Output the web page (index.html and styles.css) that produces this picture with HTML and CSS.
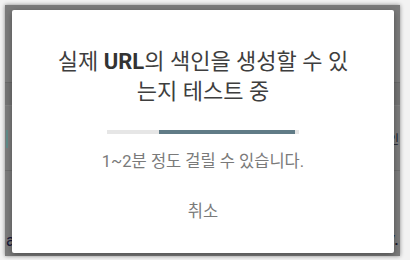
FILE: index.html
```html
<!DOCTYPE html>
<html lang="ko">
<head>
  <meta charset="UTF-8">
  <meta name="viewport" content="width=device-width, initial-scale=1.0">
  <title>URL 검사</title>
  <link rel="stylesheet" href="styles.css">
</head>
<body>

  <div class="backdrop">
    <div class="page">
      <div class="page-top"></div>
      <div class="page-band"></div>
      <div class="page-row">
        <span class="mark"></span>
        <span class="peek-right">인</span>
      </div>
      <div class="page-row last">
        <span class="peek-left">a</span>
        <span class="peek-right big">y.</span>
      </div>
    </div>

    <div class="dialog">
      <h1 class="title">실제 <strong>URL</strong>의 색인을 생성할 수 있는지 테스트 중</h1>
      <div class="progress"><div class="bar" style="margin-left: 27%; width: 71%"></div></div>
      <p class="note">1~2분 정도 걸릴 수 있습니다.</p>
      <button class="cancel">취소</button>
    </div>
  </div>

</body>
</html>
```

FILE: styles.css
```css
body {
  margin: 0;
  background: #f2f2f2;
  font-family: Roboto, "Noto Sans CJK KR", sans-serif;
}
.backdrop {
  position: relative;
  margin: 5px 10px 4px 5px;
  height: 251px;
  background: #7b7b7b;
  box-shadow: 0 0 4px rgba(0, 0, 0, 0.45);
  overflow: hidden;
}
.page {
  display: flex;
  flex-direction: column;
  height: 100%;
}
.page-top {
  height: 77px;
  border-bottom: 1px solid #6a6a6a;
}
.page-band {
  height: 22px;
  background: #747474;
  border-bottom: 1px solid #828282;
}
.page-row {
  height: 64px;
  border-bottom: 1px solid #6e6e6e;
  position: relative;
}
.page-row.last {
  flex: 1;
  border-bottom: none;
}
.mark {
  position: absolute;
  left: 1px;
  top: 24px;
  width: 2px;
  height: 18px;
  background: #5f8a88;
}
.peek-right {
  position: absolute;
  right: 1px;
  top: 27px;
  font-size: 12px;
  line-height: 14px;
  color: #1a1a2a;
}
.peek-right.big {
  top: 58px;
  font-size: 19px;
  line-height: 20px;
}
.peek-left {
  position: absolute;
  left: 1px;
  top: 61px;
  font-size: 16px;
  line-height: 18px;
  color: #1a1a3a;
}
.dialog {
  position: absolute;
  left: 7px;
  top: 5px;
  width: 382px;
  height: 243px;
  background: #fff;
  border-radius: 2px;
  box-shadow: 0 2px 6px rgba(0, 0, 0, 0.35);
  display: flex;
  flex-direction: column;
  align-items: center;
  box-sizing: border-box;
  padding-top: 37px;
}
.title {
  width: 305px;
  margin: 0;
  font-size: 22px;
  font-weight: 400;
  line-height: 30px;
  text-align: center;
  color: #3e3e3e;
}
.title strong {
  font-weight: 700;
  color: #333;
}
.progress {
  width: 192px;
  height: 4px;
  margin-top: 23px;
  background: #e6e6e6;
  display: flex;
}
.bar {
  height: 100%;
  background: #607b86;
}
.note {
  margin: 18px 0 0;
  font-size: 16.5px;
  line-height: 20px;
  color: #7a7a7a;
}
.cancel {
  margin-top: 20px;
  height: 36px;
  padding: 0 16px;
  border: none;
  background: none;
  font-family: inherit;
  font-size: 16.5px;
  color: #7a7a7a;
  cursor: pointer;
}
```
